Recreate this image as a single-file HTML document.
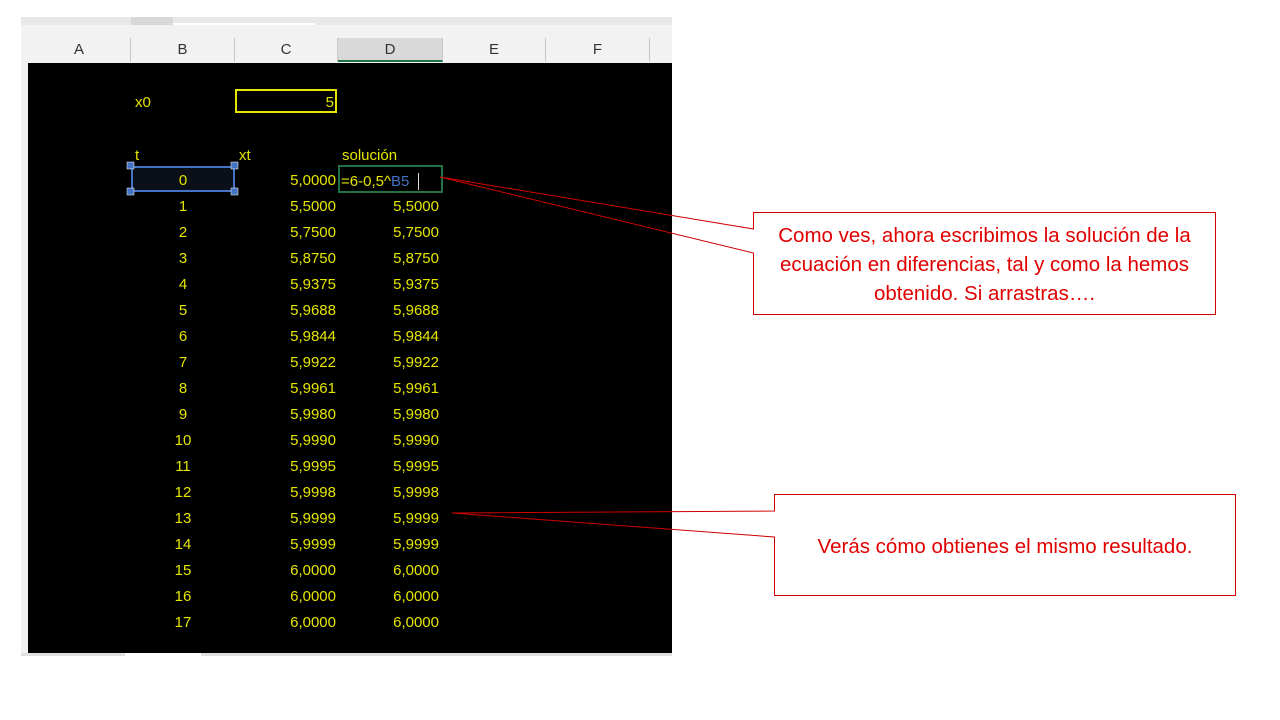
<!DOCTYPE html>
<html><head><meta charset="utf-8"><style>
body{margin:0;width:1280px;height:720px;background:#fff;position:relative;overflow:hidden;font-family:"Liberation Sans",sans-serif}
.a{position:absolute}
.y{position:absolute;color:#e5e500;font-size:15px;line-height:18px}
.r{text-align:right}
.hd{position:absolute;top:38px;height:24px;font-size:15px;color:#333;text-align:center;line-height:24px;border-right:1px solid #c8c8c8}
.cap{position:absolute;color:#e00000;font-size:20.5px;line-height:29px;text-align:center;white-space:nowrap}
</style></head><body>
<div class="a" style="left:21px;top:17px;width:651px;height:8px;background:#e8e8e8"></div>
<div class="a" style="left:131px;top:17px;width:42px;height:8px;background:#d8d8d8"></div>
<div class="a" style="left:173px;top:23px;width:142px;height:2px;background:#fff"></div>
<div class="a" style="left:21px;top:25px;width:651px;height:38px;background:#f2f2f2"></div>
<div class="a" style="left:21px;top:63px;width:7px;height:592px;background:#f2f2f2"></div>
<div class="hd" style="left:28px;width:102px">A</div>
<div class="hd" style="left:131px;width:103px">B</div>
<div class="hd" style="left:235px;width:102px">C</div>
<div class="hd" style="left:338px;width:104px;background:#d9d9d9;border-bottom:2px solid #217346;height:22px">D</div>
<div class="hd" style="left:443px;width:102px">E</div>
<div class="hd" style="left:546px;width:103px">F</div>
<div class="a" style="left:28px;top:63px;width:644px;height:590px;background:#000"></div>
<div class="a" style="left:21px;top:653px;width:651px;height:3px;background:#e0e0e0"></div>
<div class="a" style="left:125px;top:653px;width:76px;height:5px;background:#fff"></div>
<div class="y" style="left:135px;top:94px">x0</div>
<div class="a" style="left:235px;top:89px;width:102px;height:24px;border:2px solid #e5e500;box-sizing:border-box"></div>
<div class="y r" style="left:235px;top:94px;width:99px">5</div>
<div class="y" style="left:135px;top:147px">t</div>
<div class="y" style="left:239px;top:147px">xt</div>
<div class="y" style="left:342px;top:147px">solución</div>
<div class="a" style="left:131px;top:166px;width:104px;height:26px;border:2px solid #4472c4;box-sizing:border-box;background:#0a0f18"></div>
<div class="a" style="left:338px;top:165px;width:105px;height:28px;border:2px solid #217346;box-sizing:border-box"></div>
<div class="y" style="left:341px;top:173px">=6-0,5^<span style="color:#4472c4">B5</span></div>
<div class="a" style="left:418px;top:173px;width:1px;height:17px;background:#ddd"></div>
<div id="rows"></div>
<svg class="a" style="left:0;top:0" width="1280" height="720">
<g fill="#4472c4" stroke="#fff" stroke-width="0.5"><rect x="127" y="162" width="7" height="7"/><rect x="231" y="162" width="7" height="7"/><rect x="127" y="188" width="7" height="7"/><rect x="231" y="188" width="7" height="7"/></g>
<path d="M753.5,212.5H1215.5V314.5H753.5V253L440,177L753.5,229Z" fill="none" stroke="#d00000" stroke-width="1"/>
<path d="M774.5,494.5H1235.5V595.5H774.5V537L452,513L774.5,511Z" fill="none" stroke="#d00000" stroke-width="1"/>
<path d="M753.5,229.5V252.5" stroke="#fff" stroke-width="2"/>
<path d="M774.5,511.5V536.5" stroke="#fff" stroke-width="2"/>
</svg>
<div class="cap" style="left:754px;top:221px;width:461px">Como ves, ahora escribimos la solución de la<br>ecuación en diferencias, tal y como la hemos<br>obtenido. Si arrastras….</div>
<div class="cap" style="left:775px;top:532px;width:460px">Verás cómo obtienes el mismo resultado.</div>
<script>
var xs=["5,0000","5,5000","5,7500","5,8750","5,9375","5,9688","5,9844","5,9922","5,9961","5,9980","5,9990","5,9995","5,9998","5,9999","5,9999","6,0000","6,0000","6,0000"];
var h="";
for(var i=0;i<18;i++){var t=172+26*i;
h+='<div class="y" style="left:131px;top:'+t+'px;width:104px;text-align:center">'+i+'</div>';
h+='<div class="y r" style="left:235px;top:'+t+'px;width:101px">'+xs[i]+'</div>';
if(i>0)h+='<div class="y r" style="left:338px;top:'+t+'px;width:101px">'+xs[i]+'</div>';}
document.getElementById("rows").innerHTML=h;
</script>
</body></html>
